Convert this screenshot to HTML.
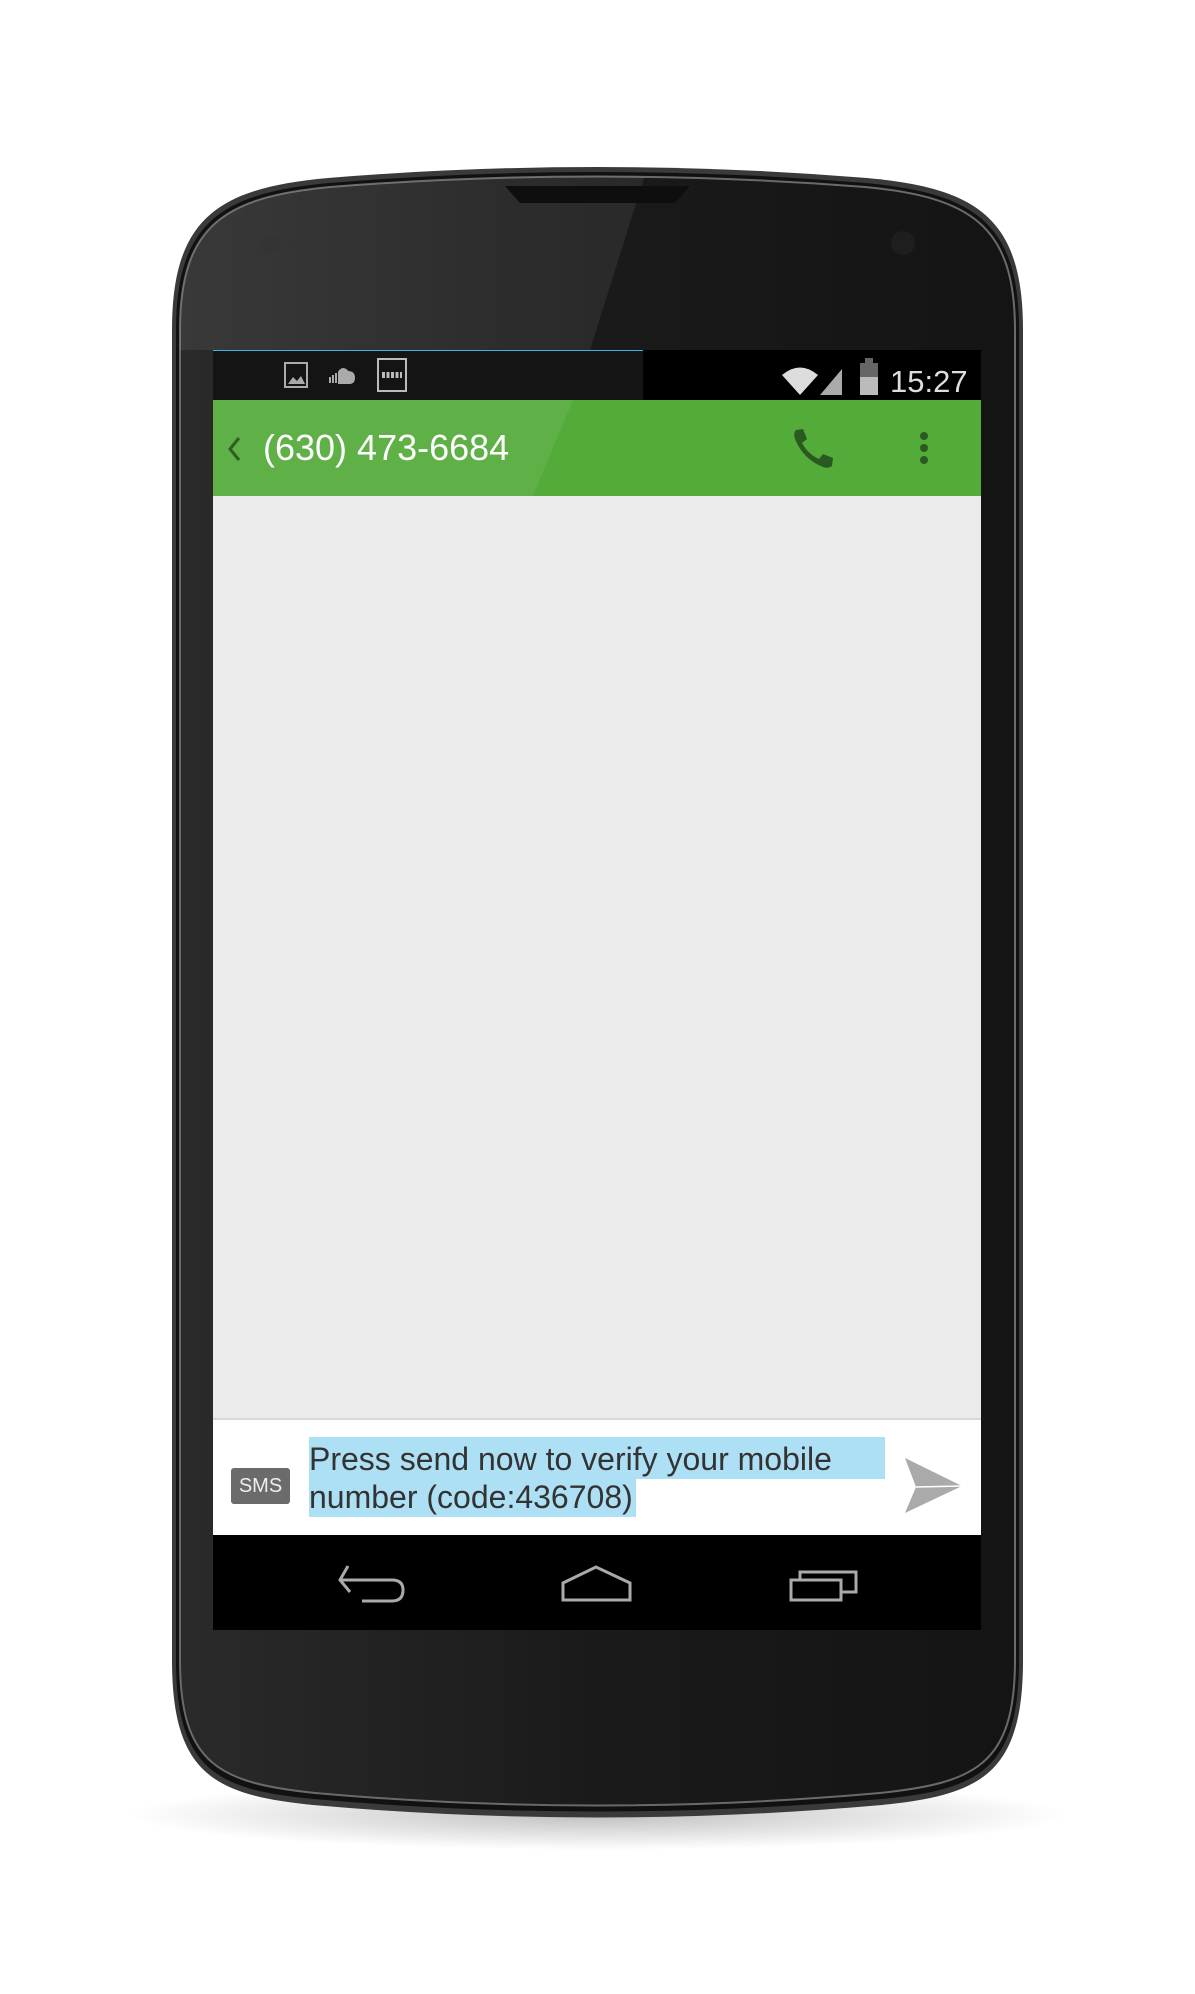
<!DOCTYPE html>
<html><head><meta charset="utf-8"><style>
html,body{margin:0;padding:0;background:#fff;width:1195px;height:1994px;overflow:hidden;position:relative;font-family:"Liberation Sans",sans-serif}
.a{position:absolute}
</style></head><body>
<svg class="a" style="left:0;top:0" width="1195" height="1994" viewBox="0 0 1195 1994">
<defs>
<radialGradient id="sh" cx="0.5" cy="0.5" r="0.5"><stop offset="0" stop-color="#000" stop-opacity="0.25"/><stop offset="1" stop-color="#000" stop-opacity="0"/></radialGradient>
<linearGradient id="bd" x1="0" y1="0" x2="1" y2="0"><stop offset="0" stop-color="#2a2a2a"/><stop offset="0.5" stop-color="#1a1a1a"/><stop offset="1" stop-color="#141414"/></linearGradient>
<clipPath id="cp"><path d="M180,330 C180,225 225,197 330,187 Q597,166 865,187 C970,197 1015,225 1015,330 L1015,1660 C1015,1765 975,1783 880,1793 Q597,1818 315,1793 C220,1783 180,1765 180,1660 Z"/></clipPath>
</defs>
<ellipse cx="597" cy="1815" rx="470" ry="35" fill="url(#sh)"/>
<path d="M172,330 C172,218 218,188 328,178 Q597,156 867,178 C977,188 1023,218 1023,330 L1023,1660 C1023,1775 980,1795 882,1805 Q597,1830 313,1805 C215,1795 172,1775 172,1660 Z" fill="#3a3a3a"/>
<path d="M176,330 C176,222 222,193 329,183 Q597,161 866,183 C973,193 1019,222 1019,330 L1019,1660 C1019,1770 978,1790 881,1799 Q597,1824 314,1799 C217,1790 176,1770 176,1660 Z" fill="#111"/>
<path d="M180,330 C180,225 225,197 330,187 Q597,166 865,187 C970,197 1015,225 1015,330 L1015,1660 C1015,1765 975,1783 880,1793 Q597,1818 315,1793 C220,1783 180,1765 180,1660 Z" fill="url(#bd)" stroke="#6a6a6a" stroke-width="2"/>
<g clip-path="url(#cp)"><polygon points="0,0 700,0 590,350 0,350" fill="#fff" opacity="0.07"/></g>
<path d="M505,186 L690,186 L675,203 L520,203 Z" fill="#0e0e0e"/>
<circle cx="903" cy="243" r="12" fill="#1e1e1e"/>
<circle cx="270" cy="245" r="10" fill="#333" opacity="0.6"/><circle cx="300" cy="245" r="10" fill="#333" opacity="0.6"/>
</svg>
<div class="a" style="left:213px;top:350px;width:768px;height:1280px;background:#000"></div>
<div class="a" style="left:213px;top:350px;width:430px;height:50px;background:#141414"></div>
<div class="a" style="left:213px;top:350px;width:430px;height:1px;background:#33b5e5"></div>
<div class="a" style="left:213px;top:400px;width:768px;height:96px;background:#53ab3a"></div>
<svg class="a" style="left:213px;top:400px" width="768" height="96"><polygon points="0,0 360,0 320,96 0,96" fill="#fff" opacity="0.07"/></svg>
<div class="a" style="left:213px;top:496px;width:768px;height:922px;background:#ebebeb"></div>
<div class="a" style="left:213px;top:1418px;width:768px;height:117px;background:#fff;border-top:2px solid #d8d8d8;box-sizing:border-box"></div>
<svg class="a" style="left:280px;top:355px" width="700" height="42" viewBox="0 0 700 42">
<rect x="5" y="8" width="22" height="24" fill="none" stroke="#aaa" stroke-width="2"/>
<path d="M8,29 L13,22 L17,26 L21,21 L25,29 Z" fill="#aaa"/>
<path d="M50,28 L50,22 M53,28 L53,20 M56,28 L56,18 M59,28 L59,17 Q63,11 68,17 Q74,17 74,23 Q74,28 69,28 Z" stroke="#aaa" stroke-width="2" fill="#aaa"/>
<rect x="98" y="4" width="28" height="32" fill="none" stroke="#bbb" stroke-width="2"/>
<path d="M102,20 H122" stroke="#bbb" stroke-width="6" stroke-dasharray="3,1.5"/>
<path d="M502,20 Q520,5 538,20 L520,40 Z" fill="#ddd"/>
<path d="M540,40 L562,14 L562,40 Z" fill="#aaa"/>
<rect x="580" y="8" width="18" height="32" fill="#bbb"/><rect x="580" y="8" width="18" height="14" fill="#666"/><rect x="585" y="3" width="8" height="5" fill="#666"/>
<text x="610" y="37" font-family="Liberation Sans" font-size="31" fill="#ddd">15:27</text>
</svg>
<svg class="a" style="left:225px;top:435px" width="20" height="30"><path d="M14,3 L5,14 L14,25" stroke="#2d5e22" stroke-width="3" fill="none"/></svg>
<div class="a" style="left:263px;top:426px;font-size:36px;color:#fff;line-height:44px">(630) 473-6684</div>
<svg class="a" style="left:790px;top:426px" width="50" height="45" viewBox="0 0 50 45"><path d="M6,4 L13,3 L17,13 L12,17 Q18,28 29,33 L33,28 L43,32 L42,40 Q38,43 33,41 Q13,33 5,13 Q3,7 6,4 Z" fill="#2b5a20"/></svg>
<svg class="a" style="left:916px;top:430px" width="16" height="44"><circle cx="8" cy="6" r="4" fill="#2b5a20"/><circle cx="8" cy="18" r="4" fill="#2b5a20"/><circle cx="8" cy="30" r="4" fill="#2b5a20"/></svg>
<div class="a" style="left:231px;top:1468px;width:59px;height:36px;background:#6b6b6b;border-radius:3px;color:#eee;font-size:20px;line-height:36px;text-align:center">SMS</div>
<div class="a" style="left:309px;top:1437px;width:576px;height:42px;background:#aee0f5"></div>
<div class="a" style="left:309px;top:1479px;width:327px;height:38px;background:#aee0f5"></div>
<div class="a" style="left:309px;top:1440px;font-size:32px;line-height:38px;color:#333;letter-spacing:0px;white-space:nowrap">Press send now to verify your mobile<br>number (code:436708)</div>
<svg class="a" style="left:900px;top:1455px" width="66" height="60"><path d="M5,3 L62,31 L5,58 L16,32 Z" fill="#aaa"/><path d="M16,32 L62,31" stroke="#fff" stroke-width="1.5"/></svg>
<svg class="a" style="left:330px;top:1560px" width="540" height="50" viewBox="0 0 540 50">
<path d="M18,6 L10,20 L20,32 M11,20 H62 Q73,20 73,30 Q73,41 62,41 H32" stroke="#aaa" stroke-width="3" fill="none"/>
<path d="M233,40 V23 L266,7 L300,23 V40 Z" stroke="#aaa" stroke-width="3" fill="none"/>
<rect x="461" y="20" width="50" height="20" stroke="#aaa" stroke-width="3" fill="none"/>
<path d="M470,20 V12 H526 V32 H511" stroke="#aaa" stroke-width="3" fill="none"/>
</svg>
</body></html>
